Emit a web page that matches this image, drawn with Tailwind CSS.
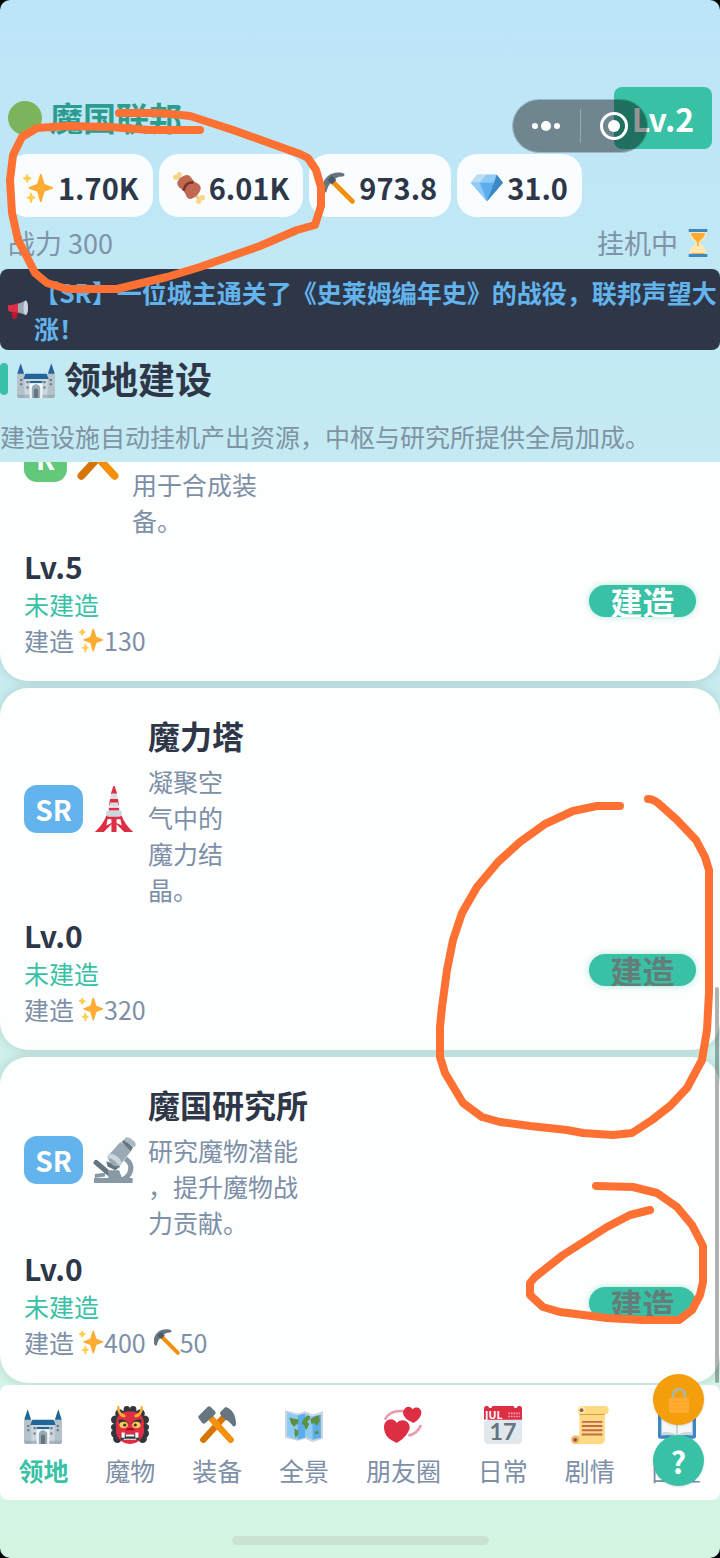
<!DOCTYPE html>
<html lang="zh-CN">
<head>
    <meta charset="UTF-8">
    <meta name="viewport" content="width=device-width, initial-scale=1.0">
    <title>魔国联邦</title>
    <script src="https://cdn.jsdelivr.net/npm/@tailwindcss/browser@4"></script>
</head>
<body class="bg-black font-['Noto_Sans_CJK_SC',sans-serif]">

<!-- Icon sprite -->
<svg class="hidden" xmlns="http://www.w3.org/2000/svg">
    <symbol id="sparkles" viewBox="0 0 36 36">
        <path fill="#ffac33" d="M34.347 16.893l-8.899-3.294-3.323-10.891c-.128-.42-.517-.708-.956-.708-.439 0-.828.288-.956.708l-3.322 10.891-8.9 3.294c-.393.146-.653.519-.653.938 0 .418.26.793.653.938l8.895 3.293 3.324 11.223c.126.424.516.715.959.715.442 0 .833-.291.959-.716l3.324-11.223 8.896-3.293c.391-.144.652-.518.652-.937 0-.418-.261-.792-.653-.938z"/>
        <path fill="#ffcc4d" d="M14.347 27.894l-2.314-.856-.9-3.3c-.118-.436-.513-.738-.964-.738-.451 0-.846.302-.965.737l-.9 3.3-2.313.856c-.393.145-.653.52-.653.938 0 .418.26.793.653.938l2.301.853.907 3.622c.112.444.511.756.97.756.459 0 .858-.312.97-.757l.907-3.622 2.301-.853c.393-.144.653-.519.653-.937 0-.418-.26-.793-.653-.937zM10.009 6.231l-2.364-.875-.876-2.365c-.145-.393-.519-.653-.938-.653-.418 0-.792.26-.938.653l-.875 2.365-2.365.875c-.393.146-.653.52-.653.938 0 .418.26.793.653.938l2.365.875.875 2.365c.146.393.52.653.938.653.418 0 .792-.26.938-.653l.875-2.365 2.365-.875c.393-.146.653-.52.653-.938 0-.418-.26-.792-.653-.938z"/>
    </symbol>
    <symbol id="meat" viewBox="0 0 36 36">
        <path d="M6 5l24 26" stroke="#f2ce84" stroke-width="4"/>
        <g fill="#f7d68c"><circle cx="3" cy="6" r="3"/><circle cx="7" cy="3" r="3"/><circle cx="29" cy="33" r="3"/><circle cx="33" cy="29" r="3"/></g>
        <path fill="#bf6952" d="M5 14c-2-5 9-13 13-10 3 2 3 4 6 7 3 2 6 2 7 6 2 5-8 15-13 13-3-1-3-4-5-7-2-4-6-4-8-9z"/>
        <path d="M12 21C13 15 17 11 23 12" stroke="#7d3026" stroke-width="3" fill="none"/>
    </symbol>
    <symbol id="pick" viewBox="0 0 36 36">
        <path d="M9 9l24 24" stroke="#f4900c" stroke-width="5.5" stroke-linecap="round"/>
        <path fill="#66757f" d="M0 20C-2 8 8-2 22 1c3 1 3 3 0 4-5 0-8 2-10 4l-3 3c-3 3-4 6-5 10-1 2-3 1-4-2z"/>
        <path fill="#4b5a66" d="M5 9l5-5 5 5-5 5z"/>
    </symbol>
    <symbol id="gem" viewBox="0 0 36 36">
        <path fill="#5dadec" d="M7 3h22l7 9-18 21L0 12z"/>
        <path fill="#bdddf4" d="M7 3h11l-8 9H0z"/>
        <path fill="#8ccaf7" d="M18 3h11l-3 9H10z"/>
        <path fill="#3b88c3" d="M29 3l7 9-18 21 8-21z"/>
        <path fill="#8ccaf7" d="M0 12h10l8 21z"/>
    </symbol>
    <symbol id="hourglass" viewBox="0 0 36 36">
        <path fill="#ffe8b6" d="M8 3h20v4c0 7-7 8-7 11s7 4 7 11v4H8v-4c0-7 7-8 7-11S8 14 8 7z"/>
        <path fill="#ffac33" d="M9 5h18c0 7-7 8-8 13v8c3 1 8 4 8 7H9c0-3 5-6 8-7v-8C16 13 9 12 9 5z"/>
        <path fill="#ffe8b6" d="M8 31c0-4 5-6 9-9h2c4 3 9 5 9 9z"/>
        <path fill="#3b88c3" d="M6 0h24v4H6zM6 32h24v4H6z"/>
    </symbol>
    <symbol id="megaphone" viewBox="0 0 36 36">
        <path fill="#be1931" d="M6 20h10v12c0 3-8 3-8 0z"/>
        <path fill="#dd2e44" d="M0 9c5 0 12 0 20-4v20C14 21 6 21 2 21c-2-2-3-9-2-12z"/>
        <path fill="#99aab5" d="M18 7L32 1c5 4 5 21 0 26l-14-5z"/>
        <ellipse cx="32" cy="14" rx="4" ry="13" fill="#ccd6dd"/>
    </symbol>
    <symbol id="castle" viewBox="0 0 36 36">
        <path fill="#226699" d="M3.5 3l3 9v3h-6v-3zM32.500 3l3 9v3h-6v-3z"/>
        <path fill="#b4c2cb" d="M0 13h8v23H2c-1 0-2-1-2-2zM28 13h8v21c0 1-1 2-2 2h-6z"/>
        <path fill="#ccd6dd" d="M7 17h22v19H7z"/>
        <path fill="#226699" d="M8 13h20l2 5H6zM12 20h12v2H12z"/>
        <path fill="#f5f8fa" d="M12 22h12v14H12z"/>
        <path fill="#99aab5" d="M14 36v-9a4 4 0 018 0v9z"/>
        <path fill="#66757f" d="M16 36v-7a2 2 0 014 0v7zM3 18h2v2H3zM3 22h2v2H3zM9 20h2v2H9zM9 25h2v2H9zM25 20h2v2h-2zM25 25h2v2h-2zM31 18h2v2h-2zM31 22h2v2h-2z"/>
        <path fill="#8899a6" d="M0 33h12v3H1zM24 33h12l-1 3H24z" opacity=".5"/>
    </symbol>
    <symbol id="ogre" viewBox="0 0 36 36">
        <g fill="#31373d"><circle cx="15" cy="3" r="3"/><circle cx="21" cy="3" r="3"/><circle cx="8" cy="7" r="4"/><circle cx="28" cy="7" r="4"/><circle cx="4" cy="13" r="4"/><circle cx="32" cy="13" r="4"/><circle cx="3" cy="20" r="3"/><circle cx="33" cy="20" r="3"/><circle cx="4" cy="26" r="4"/><circle cx="32" cy="26" r="4"/><circle cx="6" cy="31" r="4"/><circle cx="30" cy="31" r="4"/><circle cx="18" cy="18" r="15"/></g>
        <path fill="#dd2e44" d="M18 5c8 0 13 4 13 10 1 2 0 3 0 5 2 8-4 16-13 16S3 28 5 20c0-2-1-3 0-5C5 9 10 5 18 5z"/>
        <path fill="#ffac33" d="M6 0c-1 5 2 11 7 11 1-1 1-2 0-3C9 7 8 4 8 1 8 0 6-1 6 0zM30 0c1 5-2 11-7 11-1-1-1-2 0-3 4-1 5-4 5-7 0-1 2-2 2-1z"/>
        <path fill="#31373d" d="M7 13c4-1 8 1 10 4H8zM29 13c-4-1-8 1-10 4h9z"/>
        <ellipse cx="12" cy="18" rx="4" ry="3" fill="#ffcc4d"/><ellipse cx="24" cy="18" rx="4" ry="3" fill="#ffcc4d"/>
        <circle cx="13" cy="18" r="1.5" fill="#31373d"/><circle cx="23" cy="18" r="1.5" fill="#31373d"/>
        <path fill="#a0041e" d="M14 23c1-2 2-2 4-2s3 0 4 2z"/>
        <path fill="#31373d" d="M10 27h16l1 5H9z"/>
        <path fill="#fff" d="M10 25h3v5h-3zM23 25h3v5h-3zM14 27h8v2h-8zM12 31h12v1H12z"/>
    </symbol>
    <symbol id="hammers" viewBox="0 0 36 36">
        <path d="M26 9L5 32" stroke="#d67503" stroke-width="6" stroke-linecap="round"/>
        <path d="M10 9l21 23" stroke="#f4900c" stroke-width="6" stroke-linecap="round"/>
        <path fill="#66757f" d="M1 9l8-8c1-1 2-1 3 0l4 4c1 1 1 2 0 3l-9 8c-1 1-2 1-3 0l-3-4c-1-1-1-2 0-3z"/>
        <path fill="#66757f" d="M21 6l5-5c6 1 10 8 10 16 0 2-2 3-3 2-2-3-4-5-7-6l-5-5z"/>
    </symbol>
    <symbol id="map" viewBox="0 0 36 36">
        <path fill="#ccd6dd" d="M0 4l12 3 7-2 7 3 10-3v26l-10 3-7-3-7 2L0 30z"/>
        <path fill="#8ccaf7" d="M2 6l10 3v23L2 29z"/><path fill="#5dadec" d="M12 9l7-2v23l-7 2z"/><path fill="#8ccaf7" d="M19 7l7 3v22l-7-3z"/><path fill="#5dadec" d="M26 10l8-2v22l-8 2z"/>
        <path fill="#5c913b" d="M4 11l5 1 4 1-1 4-2 1-1 2-3-3zM9 21l4 3-1 4-2 2-1-4zM17 13l4-4 3 1-1 3-2 2 2 2-3 6-2-5-2-1zM24 12l8-3 1 5-3 5-2-3-3 1zM28 25l3-2 1 3-3 1z"/>
    </symbol>
    <symbol id="hearts" viewBox="0 0 36 36">
        <path d="M1 13C4 6 11 4 20 5M23 28c6-1 10-5 12-10" fill="none" stroke="#ea9aac" stroke-width="2.500"/>
        <path fill="#dd2e44" d="M0 20c0-8 9-10 12-4 6-6 14 0 12 6-2 6-7 10-12 13C5 32 0 28 0 20zM18 6c1-6 7-7 9-3 4-4 10 0 8 5-1 4-4 6-7 8-5-2-10-5-10-10z"/>
    </symbol>
    <symbol id="calendar" viewBox="0 0 36 36">
        <path fill="#e1e8ed" d="M0 10h36v22a4 4 0 01-4 4H4a4 4 0 01-4-4z"/>
        <path fill="#dd2e44" d="M0 13V2c0-1 1-2 2-2h2a2 2 0 004 0h20a2 2 0 004 0h2c1 0 2 1 2 2v11z"/>
        <path d="M23 7h11M23 10h11" stroke="#f4abba" stroke-width="1.5" stroke-dasharray="1.500 1"/>
        <text x="1" y="12" font-size="10" font-weight="700" fill="#fff" font-family="Open Sans, sans-serif">JUL</text>
        <text x="18" y="32" font-size="22" font-weight="700" text-anchor="middle" fill="#66757f" font-family="Lato, sans-serif">17</text>
    </symbol>
    <symbol id="scroll" viewBox="0 0 36 36">
        <path fill="#ffd983" d="M10 0h22c5 0 5 8 0 8v24c0 3-2 4-4 4H5c-6 0-6-8 0-8h3V8C5 6 6 0 10 0z"/>
        <path d="M8 8h24" stroke="#e39f3d" stroke-width="1"/>
        <circle cx="10" cy="4" r="3.5" fill="#ffe8b6"/><circle cx="10" cy="4" r="1.8" fill="#9a6240"/>
        <circle cx="4" cy="32" r="4" fill="#e8b878"/><circle cx="4" cy="32" r="1.8" fill="#9a4b30"/>
        <path d="M11 15h18M11 19h18M11 23h18M11 27h18" stroke="#c1694f" stroke-width="1.8" stroke-linecap="round"/>
    </symbol>
    <symbol id="book" viewBox="0 0 36 36">
        <path fill="#3b88c3" d="M0 6h36v23c0 1-1 2-2 2H21l-3 2-3-2H2c-1 0-2-1-2-2z"/>
        <path fill="#ccd6dd" d="M3 4c6-1 11-1 15 2 4-3 9-3 15-2v24c-6-1-11-1-15 2-4-3-9-3-15-2z"/>
        <path fill="#f5f8fa" d="M4 3c6-1 11 0 13 3v21c-3-2-8-3-13-2zM32 3c-6-1-11 0-13 3v21c3-2 8-3 13-2z"/>
    </symbol>
    <symbol id="lock" viewBox="0 0 36 36">
        <path d="M10 18v-7a8 8 0 0116 0v7" fill="none" stroke="#aab8a2" stroke-width="4"/>
        <rect x="4" y="15" width="28" height="21" rx="3" fill="#ffac33"/>
        <path d="M7 20h22M7 25h22M7 30h22" stroke="#f99f1c" stroke-width="1"/>
    </symbol>
    <symbol id="tower" viewBox="0 0 36 36">
        <path fill="#dd2e44" d="M17.500 0h1l2 6h-5zM15 10h6l1 5h-8zM14 17h8v4h-8z"/>
        <path fill="#d6dee4" d="M16 6h4l1 4h-6zM15 13h6l1 3h-8z"/>
        <path fill="#dd2e44" d="M12 23h12c2 6 6 10 9 13h-7l-6-6v6h-4v-6l-6 6H3c3-3 7-7 9-13z"/>
        <path fill="#fff" d="M13 26h3v3l-4 2zM23 26h-3v3l4 2z"/>
        <rect x="12" y="19" width="12" height="5" rx="2" fill="#ccd6dd"/>
    </symbol>
    <symbol id="microscope" viewBox="0 0 36 36">
        <path d="M27 17c7 5 5 14-4 17" fill="none" stroke="#8899a6" stroke-width="4"/>
        <path d="M4 20l13 11" stroke="#66757f" stroke-width="4" stroke-linecap="round"/>
        <path fill="#8899a6" d="M3 32h29c1 0 1 4 0 4H3c-1 0-1-4 0-4zM3 29l8-1v3l-8 1zM13 26h9l3 8H14z"/>
        <path fill="#66757f" d="M12 19l11 4-4 3-6-3z"/>
        <path fill="#99aab5" d="M13 15L23 4l9 6-9 12c-4 3-9-1-10-7z"/>
        <path fill="#ccd6dd" d="M12 16c4 0 8 3 9 6l3-1c0-4-5-8-10-8z"/>
        <path fill="#66757f" d="M24 4l2-2 7 6-2 3z"/>
        <path fill="#aab8c2" d="M26 3c0-4 4-3 6-1 3 2 4 4 2 6z"/>
    </symbol>
</svg>

<div class="relative flex min-h-screen flex-col overflow-hidden rounded-[10px] bg-linear-to-b from-[#bde5f8] to-[#d5f5e3] text-[#2d3748]">

    <!-- Header -->
    <header class="px-2 pt-[87px]">
        <div class="flex h-[62px] items-center">
            <span class="mr-2 size-[34px] rounded-full bg-[#7cb35b]"></span>
            <h1 class="text-[33px] font-bold text-[#2a9d8f]">魔国联邦</h1>
            <span class="ml-auto flex h-full w-[98px] items-center justify-center rounded-lg bg-[#38c1a5] text-[32px] font-bold text-white">Lv.2</span>
        </div>

        <!-- Resources -->
        <ul class="mt-[5px] flex gap-1.5 text-[29px] font-bold">
            <li class="flex h-[63px] items-center gap-1 rounded-[20px] bg-[#fafdff] px-3.5 pt-1"><svg class="size-8"><use href="#sparkles"/></svg>1.70K</li>
            <li class="flex h-[63px] items-center gap-1 rounded-[20px] bg-[#fafdff] px-3.5 pt-1"><svg class="size-8"><use href="#meat"/></svg>6.01K</li>
            <li class="flex h-[63px] items-center gap-1 rounded-[20px] bg-[#fafdff] px-3.5 pt-1"><svg class="size-8"><use href="#pick"/></svg>973.8</li>
            <li class="flex h-[63px] items-center gap-1 rounded-[20px] bg-[#fafdff] px-3.5 pt-1"><svg class="size-8"><use href="#gem"/></svg>31.0</li>
        </ul>

        <div class="flex h-[52px] items-center text-[27px] text-[#7e93a8]">
            <span>战力 300</span>
            <span class="ml-auto flex items-center gap-1.5">挂机中 <svg class="size-7"><use href="#hourglass"/></svg></span>
        </div>
    </header>

    <!-- News ticker -->
    <div class="flex items-center gap-1.5 rounded-lg bg-[#2d3748] pt-[5px] pb-1 pl-2 text-[25px] leading-9 font-bold text-[#63b3ed]">
        <svg class="size-5 shrink-0"><use href="#megaphone"/></svg>
        <p>【SR】一位城主通关了《史莱姆编年史》的战役，联邦声望大涨！</p>
    </div>

    <!-- Section title -->
    <div class="flex h-[58px] items-center">
        <span class="mr-2 h-8 w-2 rounded bg-[#38c1a5]"></span>
        <svg class="mr-2 size-10 p-px"><use href="#castle"/></svg>
        <h2 class="text-[37px] font-bold">领地建设</h2>
    </div>
    <p class="h-[54px] pt-2.5 text-[25px] leading-9 whitespace-nowrap text-[#7e93a3]">建造设施自动挂机产出资源，中枢与研究所提供全局加成。</p>

    <!-- Buildings -->
    <main class="relative flex flex-col gap-[7px] overflow-hidden pb-0.5">
        <article class="-mt-[107px] rounded-[28px] bg-[#fdfefe] px-6 pt-[23px] pb-[23px] shadow-[0_0_12px_rgba(0,0,0,0.12)]">
            <div class="flex items-center">
                <span class="mr-2 flex h-12 w-[43px] items-center justify-center rounded-[13px] bg-[#62c97b] text-[28px] font-bold text-white">R</span>
                <svg class="mr-[11px] size-[46px]"><use href="#hammers"/></svg>
                <p class="w-[125px] pt-[88px] text-[25px] leading-9 text-[#7e8fa8]">用于合成装备。</p>
            </div>
            <div class="mt-2 flex items-center justify-between">
                <div class="text-[25px] leading-9 text-[#7e8fa8]">
                    <p class="text-[30px] leading-10 font-bold text-[#2d3748]">Lv.5</p>
                    <p class="text-[#38c1a5]">未建造</p>
                    <p class="flex items-center gap-1">建造 <span class="flex items-center"><svg class="size-[26px]"><use href="#sparkles"/></svg>130</span></p>
                </div>
                <button class="mb-0.5 h-8 w-[107px] overflow-hidden rounded-full bg-[#38c1a5] shadow-[0_0_6px_rgba(56,193,165,0.4)]"><span class="block text-[32px] leading-8 font-bold text-white">建造</span></button>
            </div>
        </article>

        <article class="rounded-[28px] bg-[#fdfefe] px-6 pt-[23px] pb-[23px] shadow-[0_0_12px_rgba(0,0,0,0.12)]">
            <div class="flex items-center">
                <span class="mr-2 flex h-12 w-[59px] items-center justify-center rounded-[13px] bg-[#63b3ed] text-[28px] font-bold text-white">SR</span>
                <svg class="mr-[11px] size-[46px]"><use href="#tower"/></svg>
                <div>
                    <h3 class="text-[32px] leading-[48px] font-bold">魔力塔</h3>
                    <p class="mt-1 w-[75px] text-[25px] leading-9 text-[#7e8fa8]">凝聚空气中的魔力结晶。</p>
                </div>
            </div>
            <div class="mt-2 flex items-center justify-between">
                <div class="text-[25px] leading-9 text-[#7e8fa8]">
                    <p class="text-[30px] leading-10 font-bold text-[#2d3748]">Lv.0</p>
                    <p class="text-[#38c1a5]">未建造</p>
                    <p class="flex items-center gap-1">建造 <span class="flex items-center"><svg class="size-[26px]"><use href="#sparkles"/></svg>320</span></p>
                </div>
                <button disabled class="mb-0.5 h-8 w-[107px] overflow-hidden rounded-full bg-[#38c1a5] shadow-[0_0_6px_rgba(56,193,165,0.4)]"><span class="block text-[32px] leading-8 font-bold text-[#637e79]">建造</span></button>
            </div>
        </article>

        <article class="rounded-[28px] bg-[#fdfefe] px-6 pt-[23px] pb-[23px] shadow-[0_0_12px_rgba(0,0,0,0.12)]">
            <div class="flex items-center">
                <span class="mr-2 flex h-12 w-[59px] items-center justify-center rounded-[13px] bg-[#63b3ed] text-[28px] font-bold text-white">SR</span>
                <svg class="mr-[11px] size-[46px]"><use href="#microscope"/></svg>
                <div>
                    <h3 class="text-[32px] leading-[48px] font-bold">魔国研究所</h3>
                    <p class="mt-1 w-[150px] text-[25px] leading-9 text-[#7e8fa8] [line-break:anywhere]">研究魔物潜能，提升魔物战力贡献。</p>
                </div>
            </div>
            <div class="mt-2 flex items-center justify-between">
                <div class="text-[25px] leading-9 text-[#7e8fa8]">
                    <p class="text-[30px] leading-10 font-bold text-[#2d3748]">Lv.0</p>
                    <p class="text-[#38c1a5]">未建造</p>
                    <p class="flex items-center gap-1">建造 <span class="flex items-center"><svg class="size-[26px]"><use href="#sparkles"/></svg>400</span> <span class="ml-1 flex items-center"><svg class="size-[26px]"><use href="#pick"/></svg>50</span></p>
                </div>
                <button disabled class="mb-0.5 h-8 w-[107px] overflow-hidden rounded-full bg-[#38c1a5] shadow-[0_0_6px_rgba(56,193,165,0.4)]"><span class="block text-[32px] leading-8 font-bold text-[#637e79]">建造</span></button>
            </div>
        </article>

        <!-- Scrollbar thumb -->
        <div class="absolute right-px bottom-0.5 h-[396px] w-1 rounded-full bg-black/30"></div>
    </main>

    <!-- Tab bar -->
    <nav class="relative flex rounded-lg bg-white pt-[21px] pb-3 text-[25px] leading-9 text-[#7e8fa8]">
        <a href="#" class="flex flex-auto flex-col items-center gap-2 font-bold text-[#38c1a5]"><svg class="size-[38px]"><use href="#castle"/></svg>领地</a>
        <a href="#" class="flex flex-auto flex-col items-center gap-2"><svg class="size-[38px]"><use href="#ogre"/></svg>魔物</a>
        <a href="#" class="flex flex-auto flex-col items-center gap-2"><svg class="size-[38px]"><use href="#hammers"/></svg>装备</a>
        <a href="#" class="flex flex-auto flex-col items-center gap-2"><svg class="size-[38px]"><use href="#map"/></svg>全景</a>
        <a href="#" class="flex flex-auto flex-col items-center gap-2"><svg class="size-[38px]"><use href="#hearts"/></svg>朋友圈</a>
        <a href="#" class="flex flex-auto flex-col items-center gap-2"><svg class="size-[38px]"><use href="#calendar"/></svg>日常</a>
        <a href="#" class="flex flex-auto flex-col items-center gap-2"><svg class="size-[38px]"><use href="#scroll"/></svg>剧情</a>
        <a href="#" class="flex flex-auto flex-col items-center gap-2"><svg class="size-[38px]"><use href="#book"/></svg>图鉴</a>

        <!-- Floating buttons -->
        <div class="absolute -top-[11px] right-4 flex flex-col gap-2.5">
            <button aria-label="锁定" class="flex size-[51px] items-center justify-center rounded-full bg-[#f59e0b] shadow"><svg class="size-[26px]"><use href="#lock"/></svg></button>
            <button class="flex size-[51px] items-center justify-center rounded-full bg-[#38c1a5] text-[30px] font-bold text-white shadow">?</button>
        </div>
    </nav>

    <!-- Home indicator -->
    <div class="mx-auto mt-9 h-[9px] w-[257px] rounded-full bg-[#c9e2d4]"></div>

    <!-- Mini program capsule -->
    <div class="absolute top-[99px] right-[72px] flex h-[54px] w-[136px] items-center rounded-full border border-black/20 bg-black/42 bg-clip-padding">
        <button aria-label="更多" class="flex flex-1 justify-center"><svg class="h-3 w-7" viewBox="0 0 28 12" fill="#fff"><circle cx="3" cy="6" r="3"/><circle cx="14" cy="6" r="5"/><circle cx="25" cy="6" r="3"/></svg></button>
        <span class="h-[34px] w-px bg-white/30"></span>
        <button aria-label="关闭" class="flex flex-1 justify-center"><svg class="size-7" viewBox="0 0 28 28"><circle cx="14" cy="14" r="12.500" fill="none" stroke="#fff" stroke-width="3"/><circle cx="14" cy="14" r="6" fill="#fff"/></svg></button>
    </div>

    <!-- Hand-drawn marks -->
    <svg class="pointer-events-none absolute top-0 left-0 h-[1558px] w-full" viewBox="0 0 720 1558" fill="none" stroke="#ff7033" stroke-width="8" stroke-linecap="round" stroke-linejoin="round">
        <path d="M119 113L160 113L190 116L233 130L300 154L308 158L316 170L321 187L321 206L315 225L297 230L260 246L200 267L167 277L117 289L67 289L47 283L35 273L27 257L18 240L12 213L10 180L13 155L22 137L37 128L67 126L110 127L150 130L200 130"/>
        <path d="M620 806L597 806L573 811L545 824L520 842L498 862L477 887L462 913L453 940L447 970L442 1007L440 1027L440 1057L445 1073L463 1103L482 1117L500 1122L530 1126L567 1130L583 1133L613 1135L632 1133L652 1120L670 1106L687 1088L702 1060L707 1030L709 993L709 870L705 857L696 840L677 820L658 803Q653 799 648 799"/>
        <path d="M596 1186L633 1187L657 1193L677 1207L692 1225L703 1246L703 1282L700 1295L692 1310L679 1320L643 1320L607 1318L560 1312L543 1307L530 1295L530 1283L535 1277L563 1255L607 1227L630 1215L650 1210"/>
    </svg>
</div>

</body>
</html>
